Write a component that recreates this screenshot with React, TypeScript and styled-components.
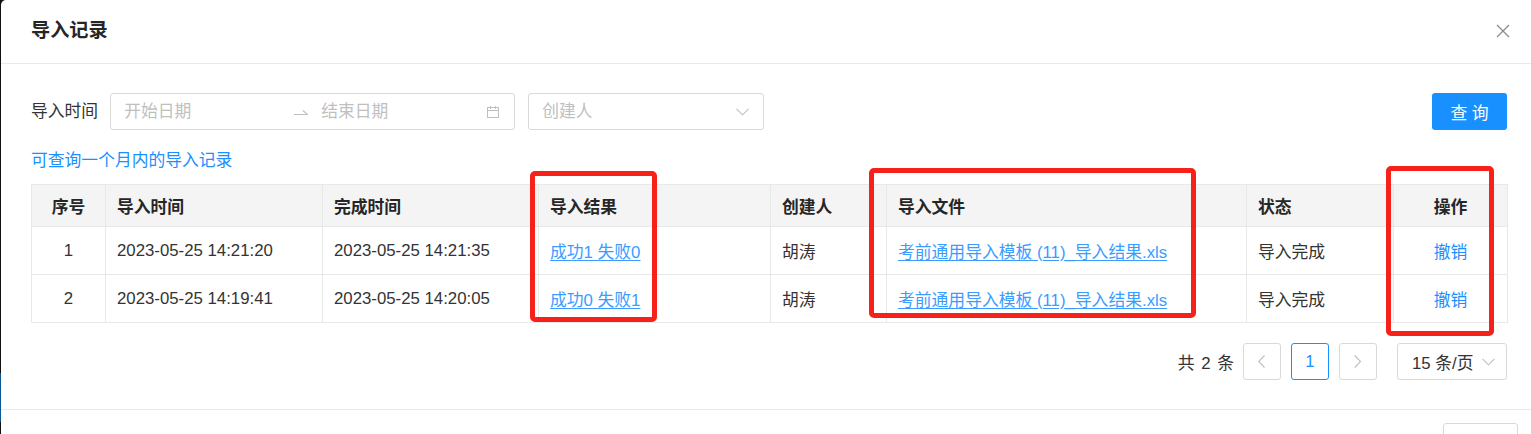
import React from 'react';
import styled, { createGlobalStyle } from 'styled-components';

const Global = createGlobalStyle`
  html, body { margin: 0; padding: 0; width: 1531px; height: 434px; overflow: hidden; }
  body {
    background: linear-gradient(to bottom, #101010 0, #101010 373px, #0b5896 373px, #0b5896 422px, #101010 422px);
    font-family: "Liberation Sans", "Noto Sans CJK SC", sans-serif;
    font-size: 16.8px;
    color: #333;
  }
  * { box-sizing: border-box; }
`;

const Backdrop = styled.div`
  display: flex;
  padding-left: 1px;
  width: 1531px;
  height: 434px;
  overflow: hidden;
`;

const Modal = styled.div`
  position: relative;
  flex-shrink: 0;
  width: 1535px;
  height: 470px;
  background: #fff;
  border-radius: 5px 5px 0 0;
`;

const Header = styled.div`
  height: 64px;
  display: flex;
  align-items: center;
  justify-content: space-between;
  padding: 0 26px 2px 30px;
  border-bottom: 1px solid #e9e9e9;
`;

const Title = styled.div`
  font-size: 19.2px;
  font-weight: 700;
  color: #262626;
  line-height: 26px;
`;

const CloseBtn = styled.div`
  width: 14px;
  height: 14px;
  display: flex;
`;

const Body = styled.div`
  padding: 29px 29px 29px 30px;
`;

const FilterRow = styled.div`
  display: flex;
  align-items: center;
  height: 37px;
`;

const Label = styled.span`
  color: #333;
  margin-right: 12px;
  line-height: 24px;
`;

const Field = styled.div<{ $w: number }>`
  width: ${(p) => p.$w}px;
  height: 37px;
  border: 1px solid #d9d9d9;
  border-radius: 3px;
  display: flex;
  align-items: center;
  padding: 0 14px 0 13px;
  margin-right: 13px;
`;

const Placeholder = styled.span<{ $w?: number }>`
  color: #bfbfbf;
  line-height: 24px;
  ${(p) => (p.$w ? `width: ${p.$w}px;` : 'flex: 1;')}
`;

const Separator = styled.span`
  width: 14px;
  margin-right: 13px;
  display: flex;
`;

const Spacer = styled.div`
  flex: 1;
`;

const PrimaryButton = styled.button`
  width: 75px;
  height: 37px;
  border: none;
  border-radius: 3px;
  background: #1890ff;
  color: #fff;
  font-family: inherit;
  font-size: 16.8px;
  padding: 0;
`;

const Hint = styled.div`
  margin-top: 18px;
  line-height: 26px;
  color: #1890ff;
`;

const Table = styled.table`
  margin-top: 10px;
  width: 1476px;
  table-layout: fixed;
  border-collapse: collapse;
`;

const Th = styled.th<{ $center?: boolean }>`
  height: 42px;
  background: #f4f4f4;
  border: 1px solid #e8e8e8;
  padding: 0 11px;
  text-align: ${(p) => (p.$center ? 'center' : 'left')};
  font-weight: 700;
  color: #262626;
  font-size: 16.8px;
`;

const Td = styled.td<{ $center?: boolean }>`
  height: 48px;
  border: 1px solid #e8e8e8;
  padding: 0 11px;
  text-align: ${(p) => (p.$center ? 'center' : 'left')};
  color: #333;
  font-size: 16.8px;
  white-space: nowrap;
`;

const Link = styled.a<{ $underline?: boolean }>`
  color: ${(p) => (p.$underline ? '#3a9cff' : '#1890ff')};
  text-decoration: ${(p) => (p.$underline ? 'underline' : 'none')};
  text-underline-offset: 2px;
  cursor: pointer;
`;

const Pager = styled.div`
  margin-top: 20px;
  height: 37px;
  display: flex;
  justify-content: flex-end;
  align-items: center;
`;

const Total = styled.span`
  margin-right: 9px;
  color: #333;
  word-spacing: 2px;
`;

const PageBtn = styled.div<{ $active?: boolean; $gap: number }>`
  width: 38px;
  height: 37px;
  border: 1px solid ${(p) => (p.$active ? '#1890ff' : '#d9d9d9')};
  border-radius: 3px;
  color: ${(p) => (p.$active ? '#1890ff' : '#333')};
  display: flex;
  align-items: center;
  justify-content: center;
  margin-right: ${(p) => p.$gap}px;
`;

const SizeSelect = styled.div`
  width: 110px;
  height: 37px;
  border: 1px solid #d9d9d9;
  border-radius: 3px;
  display: flex;
  align-items: center;
  justify-content: space-between;
  padding: 0 11px 0 14px;
  color: #333;
`;

const Footer = styled.div`
  border-top: 1px solid #e9e9e9;
  padding: 13px 18px 0 0;
  display: flex;
  justify-content: flex-end;
`;

const DefaultButton = styled.button`
  width: 75px;
  height: 37px;
  border: 1px solid #d9d9d9;
  border-radius: 3px;
  background: #fff;
  color: #333;
  font-family: inherit;
  font-size: 16.8px;
  padding: 0;
`;

const Mark = styled.div<{ $x: number; $y: number; $w: number; $h: number }>`
  position: absolute;
  left: ${(p) => p.$x}px;
  top: ${(p) => p.$y}px;
  width: ${(p) => p.$w}px;
  height: ${(p) => p.$h}px;
  border: 5px solid #f5211a;
  border-radius: 5px;
  pointer-events: none;
`;

const Chevron = ({ dir, color = '#bfbfbf' }: { dir: 'down' | 'left' | 'right'; color?: string }) => {
  if (dir === 'down')
    return (
      <svg width="13" height="8" viewBox="0 0 13 8">
        <polyline points="0.5,0.8 6.5,6.8 12.5,0.8" fill="none" stroke={color} strokeWidth="1.1" />
      </svg>
    );
  const pts = dir === 'left' ? '6.5,0.5 0.8,6.5 6.5,12.5' : '0.8,0.5 6.5,6.5 0.8,12.5';
  return (
    <svg width="8" height="13" viewBox="0 0 8 13">
      <polyline points={pts} fill="none" stroke={color} strokeWidth="1.1" />
    </svg>
  );
};

const rows = [
  { no: 1, start: '2023-05-25 14:21:20', end: '2023-05-25 14:21:35', result: '成功1 失败0' },
  { no: 2, start: '2023-05-25 14:19:41', end: '2023-05-25 14:20:05', result: '成功0 失败1' },
];

const widths = [74, 217, 216, 232, 116, 360, 147, 114];

export default function App() {
  return (
    <>
      <Global />
      <Backdrop>
        <Modal>
          <Header>
            <Title>导入记录</Title>
            <CloseBtn>
              <svg width="14" height="14" viewBox="0 0 14 14">
                <path d="M1 1 L13 13 M13 1 L1 13" stroke="#8c8c8c" strokeWidth="1.3" />
              </svg>
            </CloseBtn>
          </Header>
          <Body>
            <FilterRow>
              <Label>导入时间</Label>
              <Field $w={405}>
                <Placeholder $w={170}>开始日期</Placeholder>
                <Separator>
                  <svg width="14" height="8" viewBox="0 0 14 8">
                    <path d="M0 6.5 H13.5 L9 2.5" fill="none" stroke="#bfbfbf" strokeWidth="1.1" />
                  </svg>
                </Separator>
                <Placeholder>结束日期</Placeholder>
                <svg width="14" height="14" viewBox="0 0 14 14">
                  <rect x="1.5" y="2.5" width="11" height="10" fill="none" stroke="#bfbfbf" strokeWidth="1" />
                  <path d="M1.5 5.5 H12.5 M4.5 1 V4 M9.5 1 V4" stroke="#bfbfbf" strokeWidth="1" />
                </svg>
              </Field>
              <Field $w={236}>
                <Placeholder>创建人</Placeholder>
                <Chevron dir="down" />
              </Field>
              <Spacer />
              <PrimaryButton>查 询</PrimaryButton>
            </FilterRow>
            <Hint>可查询一个月内的导入记录</Hint>
            <Table>
              <colgroup>
                {widths.map((w, i) => (
                  <col key={i} style={{ width: w }} />
                ))}
              </colgroup>
              <thead>
                <tr>
                  <Th $center>序号</Th>
                  <Th>导入时间</Th>
                  <Th>完成时间</Th>
                  <Th>导入结果</Th>
                  <Th>创建人</Th>
                  <Th>导入文件</Th>
                  <Th>状态</Th>
                  <Th $center>操作</Th>
                </tr>
              </thead>
              <tbody>
                {rows.map((r) => (
                  <tr key={r.no}>
                    <Td $center>{r.no}</Td>
                    <Td>{r.start}</Td>
                    <Td>{r.end}</Td>
                    <Td>
                      <Link $underline>{r.result}</Link>
                    </Td>
                    <Td>胡涛</Td>
                    <Td>
                      <Link $underline>考前通用导入模板 (11)_导入结果.xls</Link>
                    </Td>
                    <Td>导入完成</Td>
                    <Td $center>
                      <Link>撤销</Link>
                    </Td>
                  </tr>
                ))}
              </tbody>
            </Table>
            <Pager>
              <Total>共 2 条</Total>
              <PageBtn $gap={10}>
                <Chevron dir="left" />
              </PageBtn>
              <PageBtn $active $gap={10}>1</PageBtn>
              <PageBtn $gap={20}>
                <Chevron dir="right" />
              </PageBtn>
              <SizeSelect>
                <span>15 条/页</span>
                <Chevron dir="down" />
              </SizeSelect>
            </Pager>
          </Body>
          <Footer>
            <DefaultButton>关 闭</DefaultButton>
          </Footer>
          <Mark $x={529} $y={171} $w={127} $h={151} />
          <Mark $x={868} $y={168} $w={327} $h={150} />
          <Mark $x={1385} $y={166} $w={108} $h={170} />
        </Modal>
      </Backdrop>
    </>
  );
}
